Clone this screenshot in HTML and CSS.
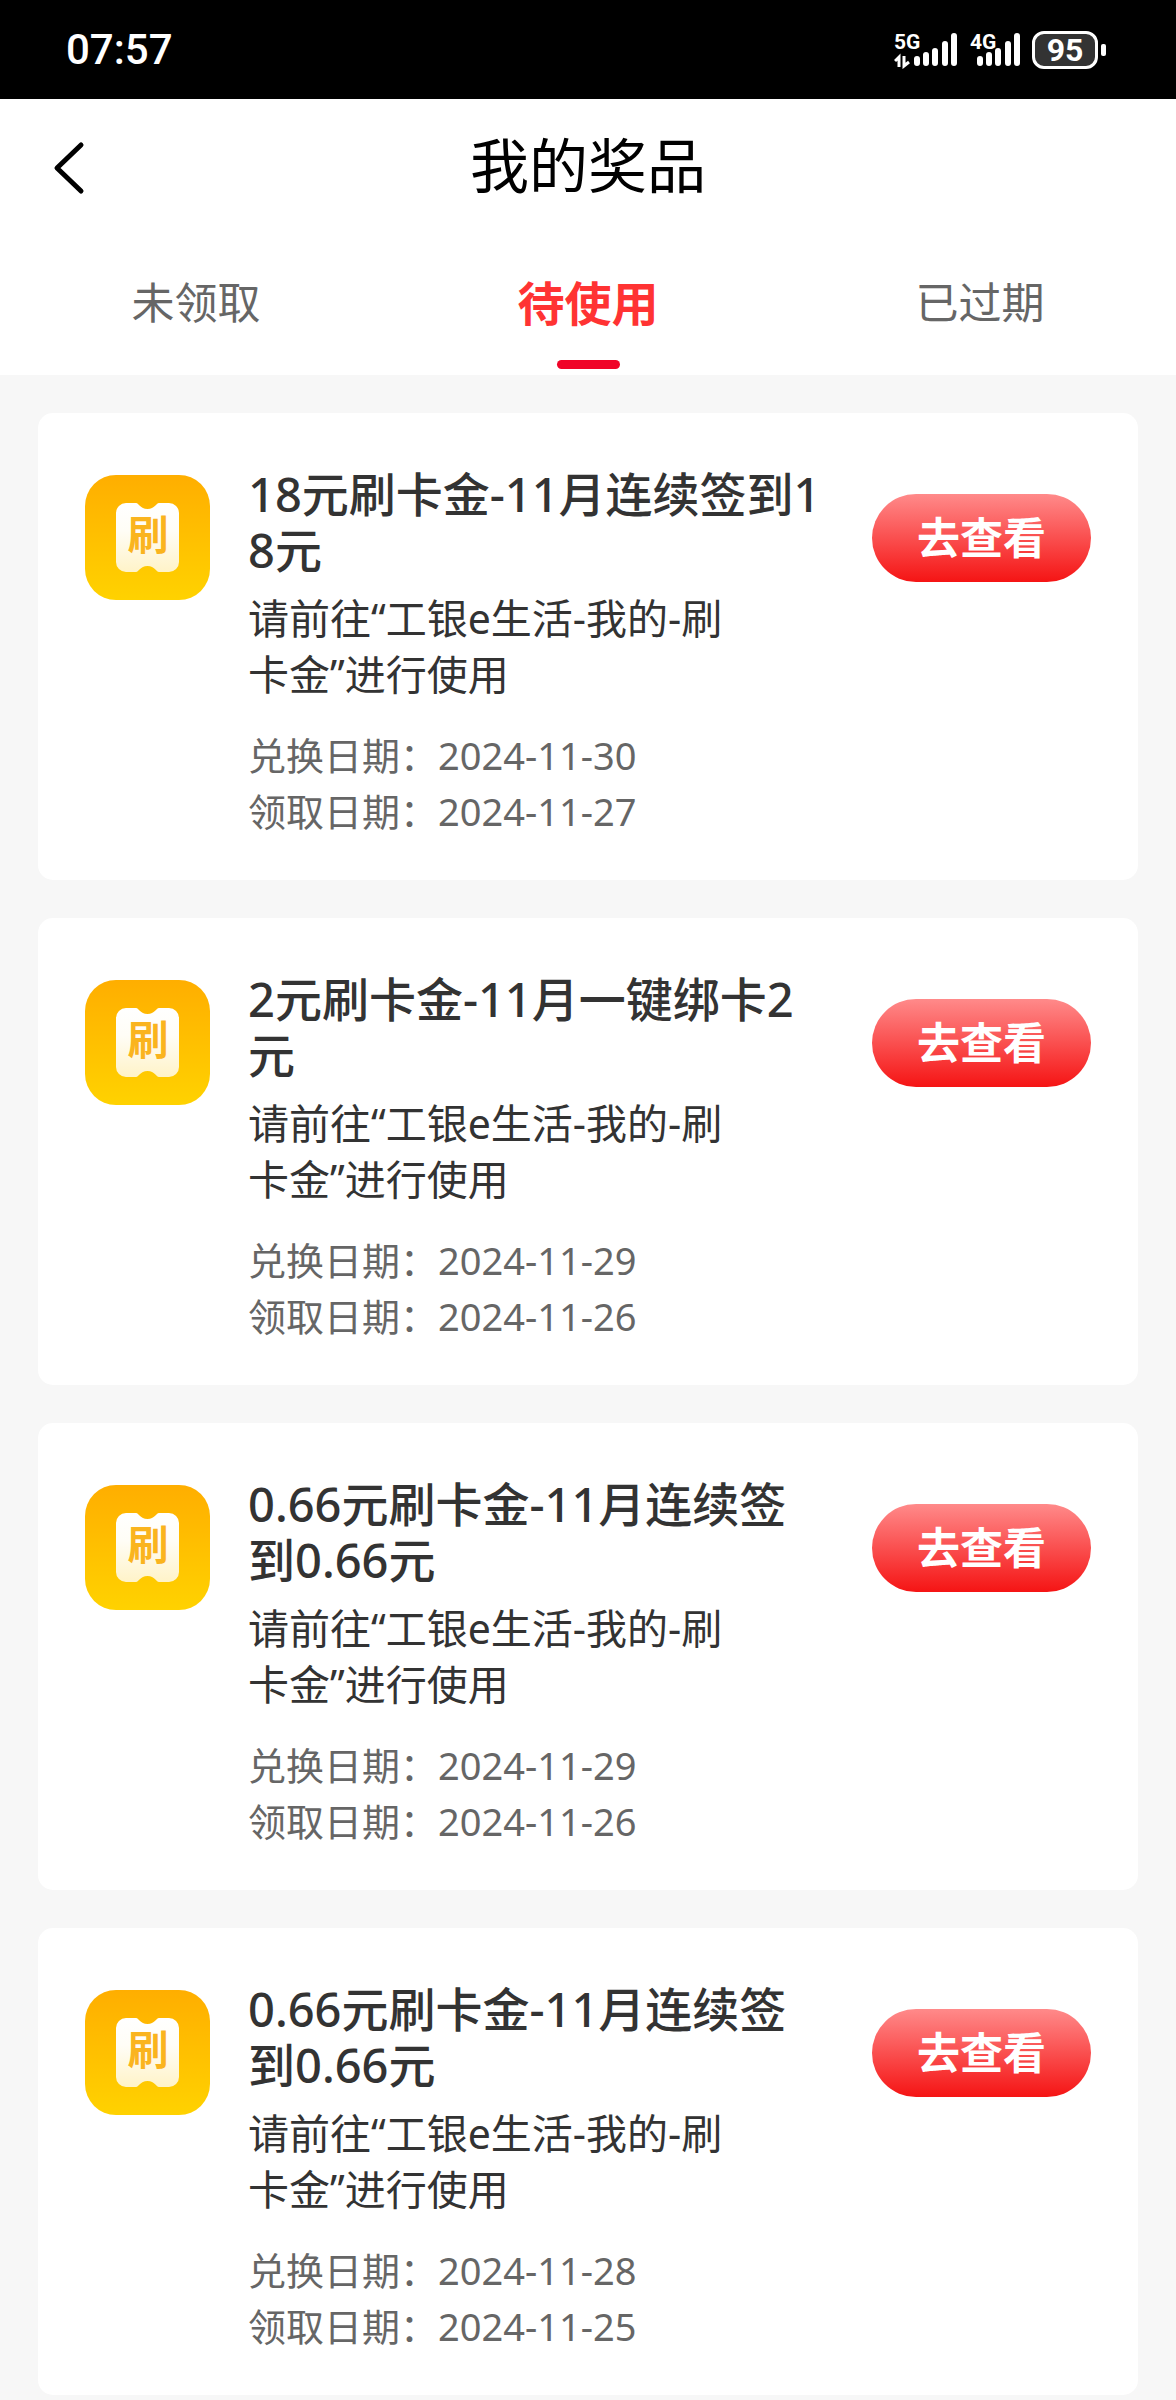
FILE: index.html
```html
<!DOCTYPE html>
<html lang="zh-CN">
<head>
  <meta charset="utf-8">
  <meta name="viewport" content="width=device-width, initial-scale=1">
  <title>我的奖品</title>
  <link rel="stylesheet" href="styles.css">
</head>
<body>
  <svg class="sprite" width="0" height="0" aria-hidden="true">
    <defs>
      <linearGradient id="tile-fill" x1="0" y1="0" x2="0" y2="1">
        <stop offset="0" stop-color="#ffae00"/>
        <stop offset="1" stop-color="#ffd200"/>
      </linearGradient>
      <linearGradient id="ticket-fill" x1="0" y1="0" x2="0" y2="1">
        <stop offset="0" stop-color="#ffffff"/>
        <stop offset="0.4" stop-color="#fffdf6"/>
        <stop offset="1" stop-color="#fff3c8"/>
      </linearGradient>
      <symbol id="coupon" viewBox="0 0 125 125">
        <rect width="125" height="125" rx="31" fill="url(#tile-fill)"/>
        <path fill="url(#ticket-fill)" d="M41 28H51C54 28 55 34 62.500 34S71 28 74 28H84A10 10 0 0 1 94 38V87A10 10 0 0 1 84 97H74C71 97 70 91 62.500 91S54 97 51 97H41A10 10 0 0 1 31 87V38A10 10 0 0 1 41 28Z"/>
        <text class="coupon-text" x="63" y="75" text-anchor="middle">刷</text>
      </symbol>
    </defs>
  </svg>

  <div class="status-bar">
    <span class="clock">07:57</span>
    <div class="status-icons">
      <svg width="64" height="38" viewBox="0 0 64 38" aria-label="5G">
        <text class="network" x="0" y="18">5G</text>
        <path class="bars" d="M23 28V32M32 24V32M41 20V32M51 13V32M60 5V32"/>
        <path class="arrows" d="M5 36V26L1 30M10 25V35L15 31"/>
      </svg>
      <svg width="50" height="38" viewBox="0 0 50 38" aria-label="4G">
        <text class="network" x="0" y="18">4G</text>
        <path class="bars" d="M10 28V32M19 24V32M28 20V32M38 13V32M47 5V32"/>
      </svg>
      <div class="battery"><span class="battery-level">95</span></div>
    </div>
  </div>

  <header class="header">
    <div class="title-bar">
      <button class="back" type="button" aria-label="返回">
        <svg width="32" height="60" viewBox="0 0 32 60"><path d="M28 10L4 33L28 56"/></svg>
      </button>
      <h1 class="page-title">我的奖品</h1>
    </div>
    <nav class="tabs">
      <button class="tab" type="button">未领取</button>
      <button class="tab tab-active" type="button">待使用</button>
      <button class="tab" type="button">已过期</button>
    </nav>
  </header>

  <main class="prizes">
    <article class="card">
      <svg class="coupon" role="img" aria-label="刷卡金"><use href="#coupon"/></svg>
      <div class="info">
        <h2 class="name">18元刷卡金-11月连续签到18元</h2>
        <p class="usage">请前往“工银e生活-我的-刷卡金”进行使用</p>
        <div class="dates">
          <p>兑换日期：<time>2024-11-30</time></p>
          <p>领取日期：<time>2024-11-27</time></p>
        </div>
      </div>
      <button class="view" type="button">去查看</button>
    </article>

    <article class="card">
      <svg class="coupon" role="img" aria-label="刷卡金"><use href="#coupon"/></svg>
      <div class="info">
        <h2 class="name">2元刷卡金-11月一键绑卡2元</h2>
        <p class="usage">请前往“工银e生活-我的-刷卡金”进行使用</p>
        <div class="dates">
          <p>兑换日期：<time>2024-11-29</time></p>
          <p>领取日期：<time>2024-11-26</time></p>
        </div>
      </div>
      <button class="view" type="button">去查看</button>
    </article>

    <article class="card">
      <svg class="coupon" role="img" aria-label="刷卡金"><use href="#coupon"/></svg>
      <div class="info">
        <h2 class="name">0.66元刷卡金-11月连续签到0.66元</h2>
        <p class="usage">请前往“工银e生活-我的-刷卡金”进行使用</p>
        <div class="dates">
          <p>兑换日期：<time>2024-11-29</time></p>
          <p>领取日期：<time>2024-11-26</time></p>
        </div>
      </div>
      <button class="view" type="button">去查看</button>
    </article>

    <article class="card">
      <svg class="coupon" role="img" aria-label="刷卡金"><use href="#coupon"/></svg>
      <div class="info">
        <h2 class="name">0.66元刷卡金-11月连续签到0.66元</h2>
        <p class="usage">请前往“工银e生活-我的-刷卡金”进行使用</p>
        <div class="dates">
          <p>兑换日期：<time>2024-11-28</time></p>
          <p>领取日期：<time>2024-11-25</time></p>
        </div>
      </div>
      <button class="view" type="button">去查看</button>
    </article>
  </main>
</body>
</html>
```

FILE: styles.css
```css
* {
  box-sizing: border-box;
  margin: 0;
  padding: 0;
}

body {
  background: #f7f7f7;
  color: #333;
  font-family: "Noto Sans", "Noto Sans CJK SC", sans-serif;
}

button {
  border: 0;
  background: none;
  font-family: inherit;
  cursor: pointer;
}

.sprite {
  position: absolute;
}

/* Status bar */
.status-bar {
  display: flex;
  align-items: center;
  justify-content: space-between;
  height: 99px;
  padding: 0 70px 0 66px;
  background: #000;
  color: #fff;
  font-family: Roboto, sans-serif;
}

.clock {
  font-size: 42px;
  font-weight: 500;
}

.status-icons {
  display: flex;
  align-items: center;
  gap: 12px;
}

.network {
  fill: #fff;
  font-size: 21px;
  font-weight: 700;
}

.bars {
  fill: none;
  stroke: #fff;
  stroke-width: 6;
  stroke-linecap: round;
}

.arrows {
  fill: none;
  stroke: #fff;
  stroke-width: 3;
}

.battery {
  display: flex;
  align-items: center;
  gap: 3px;
}

.battery::after {
  content: "";
  width: 5px;
  height: 12px;
  border-radius: 2px;
  background: #fff;
}

.battery-level {
  width: 66px;
  height: 38px;
  border: 3px solid #fff;
  border-radius: 12px;
  background: #333;
  font-size: 32px;
  font-weight: 700;
  line-height: 32px;
  text-align: center;
}

/* Header */
.header {
  background: #fff;
}

.title-bar {
  display: grid;
  grid-template-columns: 1fr auto 1fr;
  align-items: center;
  height: 132px;
  padding: 0 53px;
}

.back {
  justify-self: start;
  height: 60px;
}

.back svg {
  display: block;
  fill: none;
  stroke: #000;
  stroke-width: 5;
  stroke-linecap: round;
  stroke-linejoin: round;
}

.page-title {
  color: #000;
  font-size: 59px;
  font-weight: 400;
  line-height: 80px;
}

.tabs {
  display: grid;
  grid-template-columns: repeat(3, 1fr);
  height: 144px;
}

.tab {
  display: grid;
  grid-template-rows: 119px 9px;
  align-content: start;
  align-items: center;
  justify-items: center;
  padding-top: 10px;
  color: #666;
  font-size: 43px;
}

.tab-active {
  color: #f33;
  font-size: 47px;
  font-weight: 700;
}

.tab-active::after {
  content: "";
  width: 63px;
  height: 9px;
  border-radius: 5px;
  background: #f00428;
}

/* Prize list */
.prizes {
  display: grid;
  gap: 38px;
  padding: 38px 38px 5px;
}

.card {
  display: flex;
  align-items: flex-start;
  padding: 53px 47px 41px;
  border-radius: 15px;
  background: #fff;
}

.coupon {
  flex: none;
  width: 125px;
  height: 125px;
  margin: 9px 38px 0 0;
}

.coupon-text {
  fill: #fab41e;
  font-size: 41px;
  font-weight: 700;
}

.info {
  width: 580px;
}

.name {
  font-size: 47px;
  font-weight: 500;
  line-height: 56px;
  word-break: break-all;
}

.usage {
  max-width: 490px;
  margin-top: 12px;
  font-size: 41px;
  line-height: 56px;
}

.dates {
  margin-top: 25px;
  color: #666;
  font-size: 38px;
  line-height: 56px;
}

.view {
  flex: none;
  width: 219px;
  height: 88px;
  margin: 28px 0 0 auto;
  border-radius: 44px;
  background: linear-gradient(#ff8a8a, #f51414);
  color: #fff;
  font-size: 43px;
  font-weight: 700;
  line-height: 86px;
}
```
